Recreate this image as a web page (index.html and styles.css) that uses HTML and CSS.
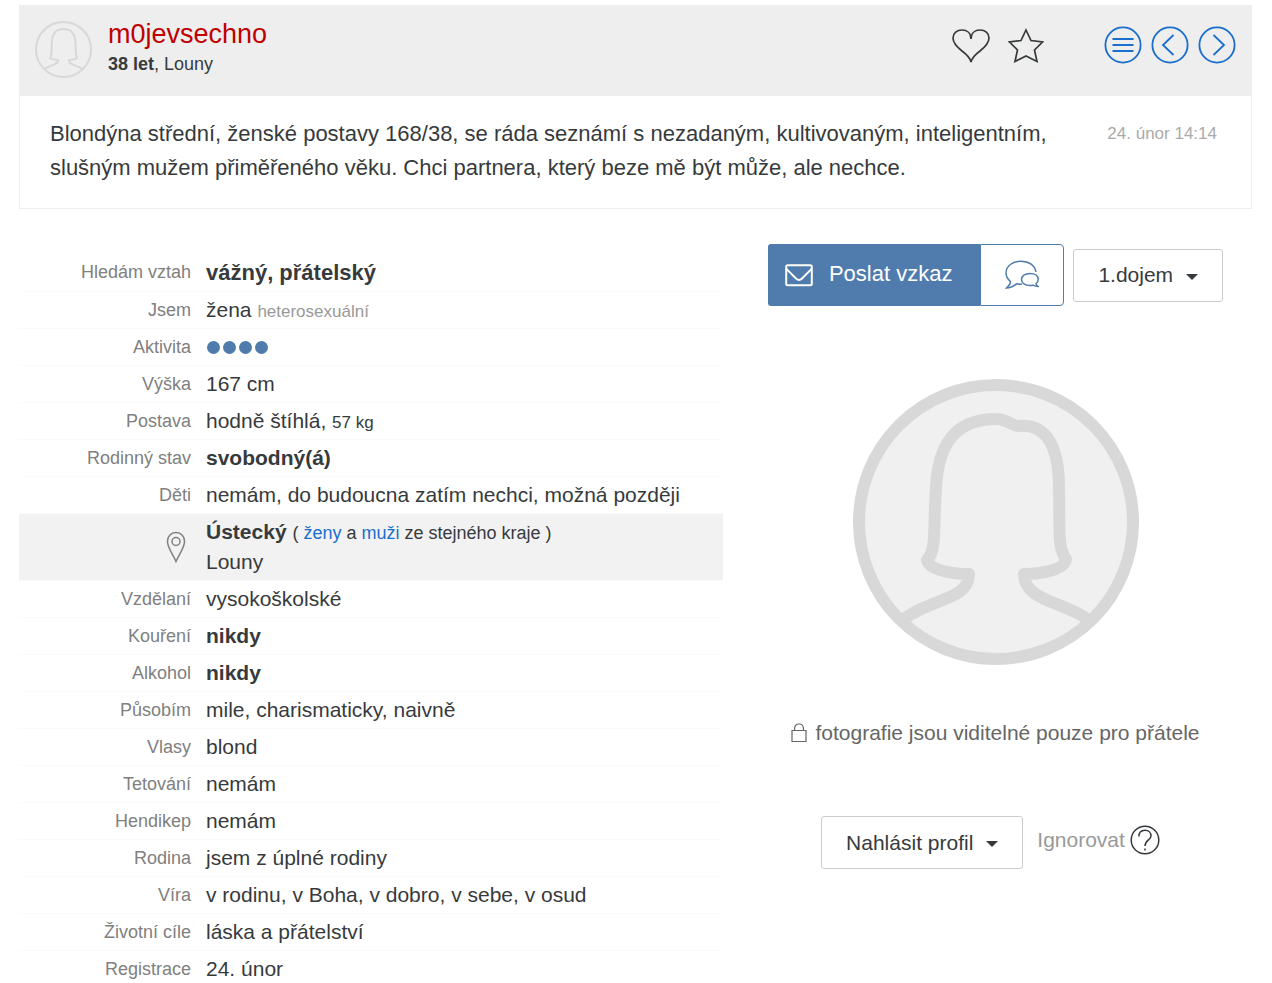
FILE: index.html
```html
<!DOCTYPE html>
<html lang="cs">

<head>
    <meta charset="UTF-8">
    <meta name="viewport" content="width=device-width, initial-scale=1.0">
    <title>m0jevsechno</title>
    <link rel="stylesheet" href="styles.css">
</head>

<body>
    <header class="profile_header">
        <svg class="avatar_small" viewBox="0 0 286 286" aria-hidden="true">
            <circle cx="143" cy="143" r="138" />
            <path d="M48 241C76 219 116 222 116 197C96 195 76 193 76 185C86 175 82 150 84 109C86 62 105 40 143 40S201 62 203 109C205 150 201 175 211 185C211 193 191 195 170 197C170 222 210 222 238 241" />
        </svg>
        <div class="who">
            <h1>m0jevsechno</h1>
            <p><b>38 let</b>, Louny</p>
        </div>
        <nav class="tools">
            <button aria-label="Oblíbit">
                <svg width="38" height="36" viewBox="0 0 38 36"><path d="M19 34C18 29 14 26 10 23C5 19 1 15 1 10C1 5 5 2 10 2C15 2 19 5 19 11C19 5 23 2 28 2C33 2 37 5 37 10C37 15 33 19 28 23C24 26 20 29 19 34Z" /></svg>
            </button>
            <button aria-label="Sledovat">
                <svg width="36" height="36" viewBox="0 0 36 36"><path d="M18 2L23 12.500L34.500 14L26.500 22L29 33.500L18 28L7 33.500L9.500 22L1.500 14L13 12.500Z" /></svg>
            </button>
        </nav>
        <nav class="pager">
            <a href="#" aria-label="Seznam"><svg width="38" height="38" viewBox="0 0 38 38"><circle cx="19" cy="19" r="17.600" /><path d="M8.500 13H29.500M8.500 19H29.500M8.500 25H29.500" /></svg></a>
            <a href="#" aria-label="Předchozí"><svg width="38" height="38" viewBox="0 0 38 38"><circle cx="19" cy="19" r="17.600" /><path d="M22.500 9L12 19L22.500 29" /></svg></a>
            <a href="#" aria-label="Další"><svg width="38" height="38" viewBox="0 0 38 38"><circle cx="19" cy="19" r="17.600" /><path d="M15.500 9L26 19L15.500 29" /></svg></a>
        </nav>
    </header>

    <section class="intro">
        <p>Blondýna střední, ženské postavy 168/38, se ráda seznámí s nezadaným, kultivovaným, inteligentním, slušným mužem přiměřeného věku. Chci partnera, který beze mě být může, ale nechce.</p>
        <time>24. únor 14:14</time>
    </section>

    <main>
        <table class="details">
            <tr><th scope="row">Hledám vztah</th><td class="first"><b>vážný, přátelský</b></td></tr>
            <tr><th scope="row">Jsem</th><td>žena <span class="muted">heterosexuální</span></td></tr>
            <tr><th scope="row">Aktivita</th><td><div class="dots"><i></i><i></i><i></i><i></i></div></td></tr>
            <tr><th scope="row">Výška</th><td>167 cm</td></tr>
            <tr><th scope="row">Postava</th><td>hodně štíhlá, <span class="small">57 kg</span></td></tr>
            <tr><th scope="row">Rodinný stav</th><td><b>svobodný(á)</b></td></tr>
            <tr><th scope="row">Děti</th><td>nemám, do budoucna zatím nechci, možná později</td></tr>
            <tr class="region">
                <th scope="row" aria-label="Kraj"><svg width="20" height="32" viewBox="0 0 20 32"><path d="M10 30.500C7 23 1.500 17 1.500 10.500C1.500 5 5 1.500 10 1.500S18.500 5 18.500 10.500C18.500 17 13 23 10 30.500Z" /><circle cx="10" cy="10.500" r="4" /></svg></th>
                <td><b>Ústecký</b> <span class="same">( <a href="#">ženy</a> a <a href="#">muži</a> ze stejného kraje )</span><br>Louny</td>
            </tr>
            <tr><th scope="row">Vzdělaní</th><td>vysokoškolské</td></tr>
            <tr><th scope="row">Kouření</th><td><b>nikdy</b></td></tr>
            <tr><th scope="row">Alkohol</th><td><b>nikdy</b></td></tr>
            <tr><th scope="row">Působím</th><td>mile, charismaticky, naivně</td></tr>
            <tr><th scope="row">Vlasy</th><td>blond</td></tr>
            <tr><th scope="row">Tetování</th><td>nemám</td></tr>
            <tr><th scope="row">Hendikep</th><td>nemám</td></tr>
            <tr><th scope="row">Rodina</th><td>jsem z úplné rodiny</td></tr>
            <tr><th scope="row">Víra</th><td>v rodinu, v Boha, v dobro, v sebe, v osud</td></tr>
            <tr><th scope="row">Životní cíle</th><td>láska a přátelství</td></tr>
            <tr><th scope="row">Registrace</th><td>24. únor</td></tr>
        </table>

        <aside>
            <div class="actions">
                <div class="group">
                    <button class="send">
                        <svg width="28" height="24" viewBox="0 0 28 24"><rect x="1.200" y="2.200" width="25.600" height="20" rx="1.500" /><path d="M1.500 6C5 9.500 9 13.500 11 15.500C13 17.500 15 17.500 17 15.500C19 13.500 23 9.500 26.500 6" /></svg>
                        Poslat vzkaz
                    </button>
                    <button class="chat" aria-label="Chat">
                        <svg width="34" height="30" viewBox="0 0 34 30"><path d="M17 24C15 24.300 13 24.200 11.500 23.800C8 26.500 5 28 1.500 28C4 26 5.500 24 5.500 21.500C2.500 19 1 16.500 1 13C1 6 7.500 1.200 16 1.200C24 1.200 30 5.500 31 12" /><path d="M25 13.500C20 13.500 16.500 16 16.500 19.500C16.500 23 20 25.500 25 25.500C26 25.500 27 25.400 28 25.200C29.500 26 31 26.500 33 26.500C31.800 25.500 31 24.500 31 23.500C32.500 22.500 33.200 21 33.200 19.500C33.200 16 30 13.500 25 13.500Z" /></svg>
                    </button>
                </div>
                <button class="drop">1.dojem <span class="caret"></span></button>
            </div>

            <svg class="avatar" viewBox="0 0 286 286" aria-hidden="true">
                <circle cx="143" cy="143" r="137" />
                <path d="M50 241C76 219 116 222 116 195C96 195 76 190 74 181C84 171 80 150 83 109C85 65 103 40 143 40C154 40 159 47 165 47C195 44 206 70 206 109C207 150 204 168 213 180C212 190 191 195 171 195C171 222 210 222 236 241" />
            </svg>

            <p class="locked">
                <svg width="16" height="20" viewBox="0 0 16 20"><path d="M1 7.500H15V18.500H1ZM3.500 7.500V6C3.500 3 5 1 8 1S12.500 3 12.500 6V7.500" /></svg>
                fotografie jsou viditelné pouze pro přátele
            </p>

            <div class="report">
                <button class="drop">Nahlásit profil <span class="caret"></span></button>
                <a href="#" class="ignore">Ignorovat
                    <svg width="30" height="30" viewBox="0 0 30 30"><circle cx="15" cy="15" r="13.800" /><path d="M9 11.500C8.500 8 11 5.300 15 5.300S21 8 21 11C21 15 15 15 15 21M15 23.500V25.500" /></svg>
                </a>
            </div>
        </aside>
    </main>
</body>

</html>
```
FILE: styles.css
```css
* {
    box-sizing: border-box;
}

body {
    margin: 0;
    padding: 5px 20px 0 19px;
    background: #fff;
    color: #373a3c;
    font-family: "Liberation Sans", Arial, sans-serif;
    font-size: 21px;
}

h1,
p {
    margin: 0;
    font-weight: 400;
}

button {
    padding: 0;
    background: none;
    border: 0;
    color: inherit;
    font: inherit;
    cursor: pointer;
}

a {
    color: #1a6ecc;
    text-decoration: none;
}

svg {
    display: block;
    flex: none;
    fill: none;
    stroke: currentColor;
    stroke-width: 1.5;
}

.profile_header {
    display: flex;
    align-items: flex-start;
    padding: 16px;
    padding-bottom: 15px;
    background: #eee;
}

.avatar_small {
    width: 57px;
    height: 57px;
    margin-right: 16px;
    stroke: #d8d8d8;
    stroke-width: 10;
}

.who {
    flex: 1;
    font-size: 18px;
    line-height: 34px;
}

h1 {
    color: #c00000;
    font-size: 27px;
    line-height: 26px;
}

.tools {
    display: flex;
    gap: 18px;
    margin: 7px 60px 0 0;
}

.tools svg {
    stroke-width: 1.7;
}

.pager {
    display: flex;
    gap: 9px;
    margin-top: 5px;
}

.pager svg {
    stroke-width: 1.8;
}

.intro {
    display: flex;
    justify-content: space-between;
    gap: 40px;
    padding: 21px 34px 23px 30px;
    border: 1px solid #eee;
    border-top: 0;
    font-size: 22px;
    line-height: 34px;
}

.intro time {
    flex: none;
    color: #aaa;
    font-size: 17px;
}

main {
    display: grid;
    grid-template-columns: 704fr 513fr;
    gap: 16px;
    padding-top: 35px;
}

.details {
    width: 100%;
    height: max-content;
    margin-top: 9px;
    border-collapse: collapse;
}

.details th {
    width: 172px;
    padding: 0;
    color: #808080;
    font-size: 18px;
    font-weight: 400;
    text-align: right;
}

.details td {
    padding: 3px 0 3px 15px;
    line-height: 30px;
}

.details tr {
    border-bottom: 1px solid #fafafa;
}

.details .first {
    padding-top: 5px;
    font-size: 22px;
}

.muted,
.small,
.same {
    font-size: 17px;
    line-height: 20px;
}

.muted {
    color: #999;
}

.same {
    font-size: 18px;
}

.dots {
    display: flex;
    align-items: center;
    gap: 3px;
    height: 30px;
    padding-left: 1px;
}

.dots i {
    width: 13px;
    height: 13px;
    background: #4f7cac;
    border-radius: 50%;
}

.details .region {
    background: #f2f2f2;
}

.region svg {
    margin: 0 5px 0 auto;
}

aside {
    display: flex;
    flex-direction: column;
    align-items: center;
}

.actions {
    display: flex;
    align-items: center;
    gap: 9px;
}

.group {
    display: flex;
}

.send {
    display: flex;
    align-items: center;
    gap: 16px;
    height: 62px;
    padding: 0 28px 2px 17px;
    background: #4f7cac;
    border-radius: 3px 0 0 3px;
    color: #fff;
    font-size: 22px;
}

.send svg {
    margin-top: 2px;
    stroke-width: 2;
}

.chat {
    padding: 0 24px;
    border: 1px solid #4f7cac;
    border-radius: 0 4px 4px 0;
    color: #4f7cac;
}

.drop {
    display: flex;
    align-items: center;
    gap: 13px;
    height: 53px;
    padding: 0 24px;
    border: 1px solid #ccc;
    border-radius: 3px;
}

.caret {
    margin-top: 3px;
    border: 6px solid transparent;
    border-top-color: currentColor;
    border-bottom: 0;
}

.avatar {
    width: 286px;
    margin: 73px 0 54px;
    fill: #f0f0f0;
    stroke: #d8d8d8;
    stroke-width: 12;
    stroke-linejoin: round;
}

.locked {
    display: flex;
    align-items: center;
    gap: 8px;
    color: #666;
    line-height: 28px;
}

.locked svg {
    stroke-width: 1.2;
}

.report {
    display: flex;
    align-items: center;
    gap: 14px;
    margin-top: 69px;
    margin-right: 10px;
}

.ignore {
    display: flex;
    align-items: center;
    gap: 5px;
    padding-bottom: 6px;
    color: #999;
}

.ignore svg {
    color: #373a3c;
}
```
